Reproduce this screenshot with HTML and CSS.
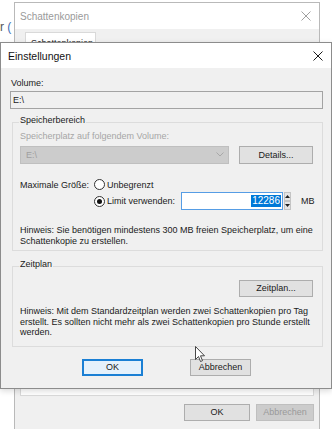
FILE: index.html
```html
<!DOCTYPE html>
<html lang="de">
<head>
  <meta charset="UTF-8">
  <title>Einstellungen</title>
  <link rel="stylesheet" href="styles.css">
</head>
<body>
  <div class="screen">
    <div class="behind">r <span class="paren">(</span></div>

    <!-- Hintergrundfenster -->
    <div class="win back-win">
      <div class="titlebar">
        <span class="title">Schattenkopien</span>
        <svg class="close" width="10" height="10" viewBox="0 0 10 10"><path d="M0.5 0.5 L9.5 9.5 M9.5 0.5 L0.5 9.5" stroke="#a0a0a0" stroke-width="1" fill="none"/></svg>
      </div>
      <div class="back-body">
        <div class="tab">Schattenkopien</div>
        <div class="tab-panel"></div>
        <div class="back-buttons">
          <div class="btn btn-back-ok">OK</div>
          <div class="btn btn-disabled">Abbrechen</div>
        </div>
      </div>
    </div>

    <!-- Dialog Einstellungen -->
    <div class="win dialog">
      <div class="titlebar">
        <span class="title">Einstellungen</span>
        <svg class="close" width="10" height="10" viewBox="0 0 10 10"><path d="M0.5 0.5 L9.5 9.5 M9.5 0.5 L0.5 9.5" stroke="#1a1a1a" stroke-width="1" fill="none"/></svg>
      </div>
      <div class="dialog-body">
        <div class="label volume-label">Volume:</div>
        <div class="readonly-box">E:\</div>

        <div class="group group-storage">
          <div class="legend">Speicherbereich</div>
          <div class="label disabled-text">Speicherplatz auf folgendem Volume:</div>
          <div class="combo-row">
            <div class="combo">
              <span>E:\</span>
              <svg width="8" height="5" viewBox="0 0 8 5"><path d="M0.5 0.5 L4 4 L7.5 0.5" stroke="#a8a8a8" fill="none"/></svg>
            </div>
            <div class="btn btn-details">Details...</div>
          </div>

          <div class="size-row">
            <span class="size-label">Maximale Größe:</span>
            <span class="radio"></span>
            <span class="radio-text">Unbegrenzt</span>
          </div>
          <div class="limit-row">
            <span class="radio on"></span>
            <span class="radio-text limit-text">Limit verwenden:</span>
            <div class="num-box"><span class="selected">12286</span></div>
            <div class="spinner">
              <div class="spin-btn"><svg width="5" height="3" viewBox="0 0 5 3"><path d="M0 3 L2.5 0 L5 3 Z" fill="#222"/></svg></div>
              <div class="spin-btn"><svg width="5" height="3" viewBox="0 0 5 3"><path d="M0 0 L2.5 3 L5 0 Z" fill="#222"/></svg></div>
            </div>
            <span class="unit">MB</span>
          </div>

          <div class="hint hint-storage">Hinweis: Sie benötigen mindestens 300 MB freien Speicherplatz, um eine<br>Schattenkopie zu erstellen.</div>
        </div>

        <div class="group group-schedule">
          <div class="legend">Zeitplan</div>
          <div class="schedule-row">
            <div class="btn btn-details">Zeitplan...</div>
          </div>
          <div class="hint hint-schedule">Hinweis: Mit dem Standardzeitplan werden zwei Schattenkopien pro Tag<br>erstellt. Es sollten nicht mehr als zwei Schattenkopien pro Stunde erstellt<br>werden.</div>
        </div>

        <div class="dialog-buttons">
          <div class="btn btn-default">OK</div>
          <div class="btn">Abbrechen</div>
        </div>
      </div>
    </div>

    <svg class="cursor" width="11" height="17" viewBox="0 0 11 17">
      <path d="M0.5 0.5 L0.5 13.5 L3.5 10.5 L5.5 15.5 L7.5 14.7 L5.5 9.8 L9.5 9.8 Z" fill="#fff" stroke="#333" stroke-width="0.9" stroke-linejoin="round"/>
    </svg>
  </div>
</body>
</html>
```

FILE: styles.css
```css
body {
  margin: 0;
  padding: 0;
  background-color: #fff;
  font-family: "Liberation Sans", Arial, sans-serif;
  font-size: 9px;
  color: #1a1a1a;
}

.screen {
  position: relative;
  width: 332px;
  height: 429px;
  overflow: hidden;
  display: flex;
  align-items: flex-start;
}

.behind {
  width: 14px;
  flex: none;
  padding-top: 21px;
  font-size: 12px;
  line-height: 12px;
  color: #555;
  white-space: nowrap;
}

.behind .paren {
  color: #3a6cb5;
}

.win {
  box-sizing: border-box;
  background-color: #f0f0f0;
}

.titlebar {
  display: flex;
  align-items: center;
  justify-content: space-between;
  background-color: #fff;
}

.close {
  display: block;
}

/* Hintergrundfenster */

.back-win {
  flex: none;
  width: 306px;
  height: 440px;
  margin-top: 2px;
  border: 1px solid #b9b9b9;
}

.back-win .titlebar {
  height: 26px;
  padding: 0 8px 0 5px;
}

.back-win .title {
  font-size: 10px;
  color: #9a9a9a;
}

.back-body {
  padding: 3px 5px 0 5px;
}

.tab {
  width: 71px;
  height: 14px;
  margin-left: 5px;
  box-sizing: border-box;
  border: 1px solid #d9d9d9;
  border-bottom: none;
  background-color: #fff;
  padding: 5px 0 0 5px;
  line-height: 11px;
  overflow: hidden;
}

.tab-panel {
  height: 350px;
  box-sizing: border-box;
  background-color: #fff;
  border: 1px solid #d9d9d9;
}

.back-buttons {
  display: flex;
  justify-content: flex-end;
  gap: 6px;
  margin-top: 8px;
}

.btn {
  box-sizing: border-box;
  height: 17px;
  display: flex;
  align-items: center;
  justify-content: center;
  background-color: #e1e1e1;
  border: 1px solid #adadad;
  color: #1a1a1a;
  line-height: 11px;
}

.btn-back-ok {
  width: 66px;
}

.btn-disabled {
  width: 58px;
  background-color: #cccccc;
  border-color: #bfbfbf;
  color: #9a9a9a;
}

/* Dialog Einstellungen */

.dialog {
  position: absolute;
  left: 0;
  top: 42px;
  width: 332px;
  height: 347px;
  border: 1px solid #8c8c8c;
  box-shadow: 0 2px 6px rgba(0, 0, 0, 0.15);
}

.dialog .titlebar {
  height: 25px;
  padding: 0 8px 0 7px;
}

.dialog .title {
  font-size: 10.5px;
  color: #111;
}

.dialog-body {
  padding: 10px 8px 0 9px;
}

.label {
  line-height: 11px;
  white-space: nowrap;
}

.volume-label {
  padding-left: 1px;
}

.readonly-box {
  box-sizing: border-box;
  height: 18px;
  margin-top: 2px;
  border: 1px solid #a3a3a3;
  padding-left: 2px;
  line-height: 16px;
}

.group {
  margin-left: 2px;
  border: 1px solid #dcdcdc;
  padding: 0 9px 0 7px;
}

.group-storage {
  margin-top: 13px;
  padding-bottom: 4px;
}

.group-schedule {
  margin-top: 15px;
  padding-bottom: 8px;
}

.legend {
  width: fit-content;
  margin: -8px 0 0 -1px;
  padding: 0 1px;
  line-height: 11px;
  background-color: #f0f0f0;
  color: #1a1a1a;
}

.disabled-text {
  margin-top: 5px;
  color: #a6a6a6;
}

.combo-row {
  display: flex;
  align-items: center;
  justify-content: space-between;
  margin-top: 3px;
  height: 19px;
}

.combo {
  box-sizing: border-box;
  width: 209px;
  height: 18px;
  display: flex;
  align-items: center;
  justify-content: space-between;
  padding: 0 4px 0 5px;
  background-color: #cccccc;
  border: 1px solid #bfbfbf;
  color: #a0a0a0;
}

.combo svg {
  display: block;
}

.btn-details {
  width: 74px;
}

.combo-row .btn-details {
  align-self: flex-end;
  height: 18px;
}

.size-row {
  display: flex;
  align-items: center;
  margin-top: 15px;
  height: 11px;
}

.size-label {
  width: 74px;
  flex: none;
}

.radio {
  box-sizing: border-box;
  width: 11px;
  height: 11px;
  flex: none;
  border-radius: 50%;
  border: 1px solid #333;
  background-color: #fff;
  display: flex;
  align-items: center;
  justify-content: center;
}

.radio.on::after {
  content: "";
  width: 5px;
  height: 5px;
  border-radius: 50%;
  background-color: #111;
}

.radio-text {
  margin-left: 2px;
  white-space: nowrap;
}

.limit-row {
  display: flex;
  align-items: center;
  margin-top: 2px;
  padding-left: 74px;
  height: 18px;
}

.limit-text {
  width: 74px;
  flex: none;
}

.num-box {
  box-sizing: border-box;
  width: 102px;
  height: 18px;
  flex: none;
  background-color: #fff;
  border: 1px solid #569de5;
  display: flex;
  align-items: center;
  justify-content: flex-end;
  overflow: hidden;
  padding-right: 1px;
}

.selected {
  background-color: #0078d7;
  color: #fff;
  line-height: 12px;
  padding: 0 1px;
  font-size: 10px;
}

.spinner {
  width: 10px;
  height: 18px;
  margin-left: 1px;
  display: flex;
  flex-direction: column;
}

.spin-btn {
  flex: 1;
  box-sizing: border-box;
  background-color: #e5e5e5;
  border: 1px solid #c4c4c4;
  display: flex;
  align-items: center;
  justify-content: center;
}

.spin-btn svg {
  display: block;
}

.unit {
  margin-left: 10px;
}

.hint {
  line-height: 10.5px;
  white-space: nowrap;
}

.hint-storage {
  margin-top: 15px;
}

.schedule-row {
  display: flex;
  justify-content: flex-end;
  margin-top: 10px;
}

.hint-schedule {
  margin-top: 9px;
}

.dialog-buttons {
  display: flex;
  gap: 47px;
  margin-top: 12px;
  padding-left: 72px;
}

.dialog-buttons .btn {
  width: 61px;
}

.btn-default {
  border: 2px solid #1a7fd4;
  background-color: #e5f1fb;
}

.cursor {
  position: absolute;
  left: 195px;
  top: 346px;
}
```
